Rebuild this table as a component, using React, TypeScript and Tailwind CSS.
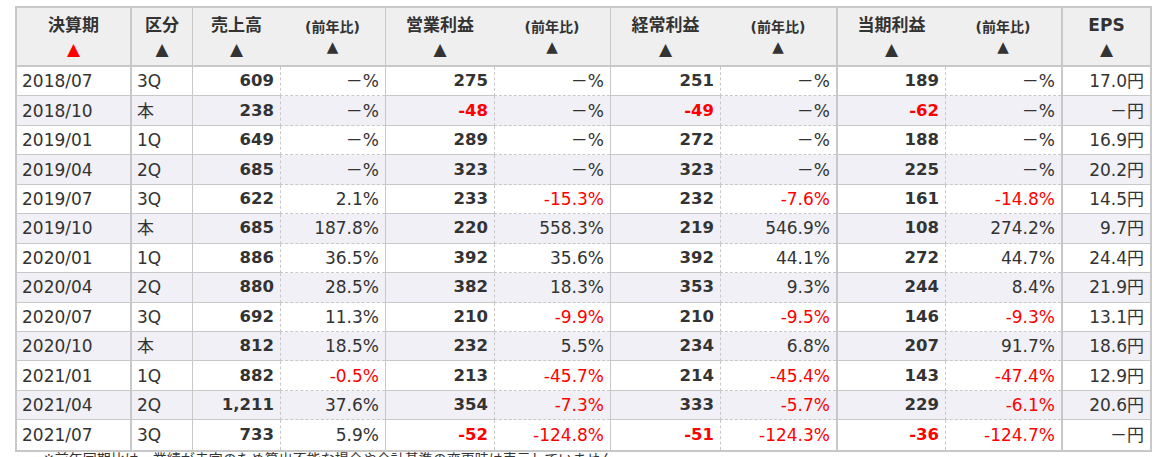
import React from "react";

type Row = string[];

const rows: Row[] = [
  ["2018/07", "3Q", "609", "－%", "275", "－%", "251", "－%", "189", "－%", "17.0円"],
  ["2018/10", "本", "238", "－%", "-48", "－%", "-49", "－%", "-62", "－%", "－円"],
  ["2019/01", "1Q", "649", "－%", "289", "－%", "272", "－%", "188", "－%", "16.9円"],
  ["2019/04", "2Q", "685", "－%", "323", "－%", "323", "－%", "225", "－%", "20.2円"],
  ["2019/07", "3Q", "622", "2.1%", "233", "-15.3%", "232", "-7.6%", "161", "-14.8%", "14.5円"],
  ["2019/10", "本", "685", "187.8%", "220", "558.3%", "219", "546.9%", "108", "274.2%", "9.7円"],
  ["2020/01", "1Q", "886", "36.5%", "392", "35.6%", "392", "44.1%", "272", "44.7%", "24.4円"],
  ["2020/04", "2Q", "880", "28.5%", "382", "18.3%", "353", "9.3%", "244", "8.4%", "21.9円"],
  ["2020/07", "3Q", "692", "11.3%", "210", "-9.9%", "210", "-9.5%", "146", "-9.3%", "13.1円"],
  ["2020/10", "本", "812", "18.5%", "232", "5.5%", "234", "6.8%", "207", "91.7%", "18.6円"],
  ["2021/01", "1Q", "882", "-0.5%", "213", "-45.7%", "214", "-45.4%", "143", "-47.4%", "12.9円"],
  ["2021/04", "2Q", "1,211", "37.6%", "354", "-7.3%", "333", "-5.7%", "229", "-6.1%", "20.6円"],
  ["2021/07", "3Q", "733", "5.9%", "-52", "-124.8%", "-51", "-124.3%", "-36", "-124.7%", "－円"],
];

const widths = [113, 62, 88, 105, 109, 116, 110, 116, 109, 116, 89];

// left border classes per column (body)
const bodyLeft = [
  "",
  "border-l-2 border-l-[#c8c8c8]",
  "border-l border-l-[#c8c8c8]",
  "border-l border-dashed border-l-[#c8c8c8]",
  "border-l border-solid border-l-[#c8c8c8]",
  "border-l border-dashed border-l-[#c8c8c8]",
  "border-l border-solid border-l-[#c8c8c8]",
  "border-l border-dashed border-l-[#c8c8c8]",
  "border-l-2 border-solid border-l-[#c8c8c8]",
  "border-l border-dashed border-l-[#c8c8c8]",
  "border-l-2 border-solid border-l-[#c8c8c8]",
];

const headLeft = [
  "",
  "border-l-2 border-l-[#c8c8c8]",
  "border-l border-l-[#c8c8c8]",
  "",
  "border-l border-l-[#c8c8c8]",
  "",
  "border-l border-l-[#c8c8c8]",
  "",
  "border-l-2 border-l-[#c8c8c8]",
  "",
  "border-l-2 border-l-[#c8c8c8]",
];

const headers: { label: string; ratio: boolean; active?: boolean }[] = [
  { label: "決算期", ratio: false, active: true },
  { label: "区分", ratio: false },
  { label: "売上高", ratio: false },
  { label: "(前年比)", ratio: true },
  { label: "営業利益", ratio: false },
  { label: "(前年比)", ratio: true },
  { label: "経常利益", ratio: false },
  { label: "(前年比)", ratio: true },
  { label: "当期利益", ratio: false },
  { label: "(前年比)", ratio: true },
  { label: "EPS", ratio: false },
];

const isNeg = (s: string) => s.startsWith("-");

export default function App() {
  return (
    <div
      className="pl-[15px] pt-[6px] bg-white text-[#333]"
      style={{}}
    >
      <div className="[font-family:'DejaVu_Sans','Noto_Sans_CJK_JP',sans-serif]">
        <table className="table-fixed border-separate border-spacing-0 border-2 border-[#c8c8c8] w-[1137px]">
          <colgroup>
            {widths.map((w, i) => (
              <col key={i} style={{ width: w }} />
            ))}
          </colgroup>
          <thead>
            <tr>
              {headers.map((h, i) => (
                <th
                  key={i}
                  className={`h-[59px] p-0 align-top bg-[#efefef] border-b-2 border-b-[#c8c8c8] font-bold text-[#333] ${headLeft[i]}`}
                >
                  {h.ratio ? (
                    <div className="flex flex-col items-center pt-[10px]">
                      <div className="h-[18px] leading-[18px] text-[14px]">{h.label}</div>
                      <div className="mt-[4px] h-[14px] leading-[14px] text-[15px]">▲</div>
                    </div>
                  ) : (
                    <div className="flex flex-col items-center pt-[7px]">
                      <div className="h-[20px] leading-[20px] text-[17px]">{h.label}</div>
                      <div
                        className={`mt-[6px] h-[16px] leading-[16px] text-[17px] ${
                          h.active ? "text-[#ff0000]" : "text-[#333]"
                        }`}
                      >
                        ▲
                      </div>
                    </div>
                  )}
                </th>
              ))}
            </tr>
          </thead>
          <tbody>
            {rows.map((r, ri) => {
              const last = ri === rows.length - 1;
              const bg = ri % 2 === 1 ? "bg-[#f0f0f6]" : "bg-white";
              return (
                <tr key={ri}>
                  {r.map((c, ci) => {
                    const border = `${bodyLeft[ci]} ${last ? "" : "border-b border-b-[#c8c8c8]"}`;
                    const boldCol = ci === 2 || ci === 4 || ci === 6 || ci === 8;
                    const leftAlign = ci === 0 || ci === 1;
                    const neg = isNeg(c);
                    let cls = "";
                    if (leftAlign) cls = "text-left pl-[5px] text-[17px]";
                    else if (boldCol)
                      cls = `text-right pr-[6px] font-bold text-[16.5px] ${neg ? "text-[#ff0000]" : "text-[#333]"}`;
                    else cls = `text-right pr-[6px] text-[17px] ${neg ? "text-[#ff0000]" : "text-[#333]"}`;
                    return (
                      <td
                        key={ci}
                        className={`h-[29.45px] p-0 leading-[20px] align-middle whitespace-nowrap ${bg} ${border} ${cls}`}
                      >
                        {c}
                      </td>
                    );
                  })}
                </tr>
              );
            })}
          </tbody>
        </table>
        <div className="pl-[28px] text-[14px] leading-[14px] text-[#333] whitespace-nowrap">
          ※前年同期比は、業績が赤字のため算出不能な場合や会計基準の変更時は表示していません。
        </div>
      </div>
    </div>
  );
}
